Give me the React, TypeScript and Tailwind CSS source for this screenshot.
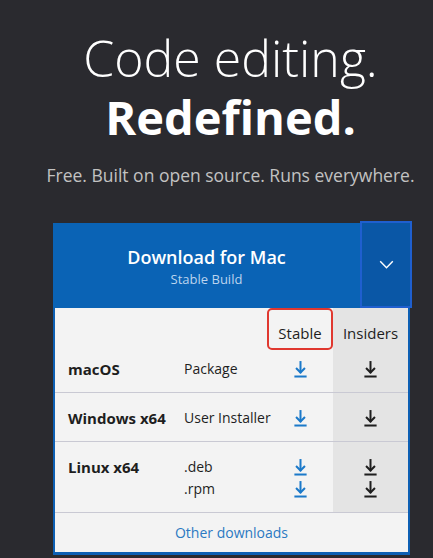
function DownArrow({ className }: { className?: string }) {
  return (
    <svg viewBox="0 0 12 16" className={className} fill="none" stroke="currentColor" strokeWidth="1.9" strokeLinecap="square">
      <path d="M6 1V10.5" />
      <path d="M1.8 6.6L6 10.8L10.2 6.6" strokeLinecap="butt" />
      <path d="M1.2 14.6H10.8" />
    </svg>
  );
}

const rows = [
  { os: "macOS", items: ["Package"] },
  { os: "Windows x64", items: ["User Installer"] },
  { os: "Linux x64", items: [".deb", ".rpm"] },
];

export default function App() {
  return (
    <div className="h-[558px] w-full overflow-hidden bg-[#2a2a2f] font-['Open_Sans',sans-serif]">
      <div className="flex flex-col items-center pl-[28px] pt-[29px] text-white">
        <h1 className="whitespace-nowrap text-center text-[50px] font-light leading-[59px]">Code editing.</h1>
        <h2 className="whitespace-nowrap text-center text-[47px] font-bold leading-[59px]">Redefined.</h2>
        <p className="mt-[16px] whitespace-nowrap text-center text-[17.5px] leading-6 text-[#c2c2c2]">
          Free. Built on open source. Runs everywhere.
        </p>
      </div>

      <div className="ml-[53px] mt-[36px] w-[357px]">
        <div className="flex h-[85px]">
          <div className="flex flex-1 flex-col items-center justify-center bg-[#0a63b5] pt-[2px]">
            <span className="text-[18px] font-semibold leading-6 text-white">Download for Mac</span>
            <span className="text-[13px] leading-5 text-[#bcd4ee]">Stable Build</span>
          </div>
          <button className="-mr-[2px] -mt-[2px] flex h-[87px] w-[52px] items-center justify-center border-2 border-[#1f5fcf] bg-[#0a57a6] text-white">
            <svg viewBox="0 0 16 10" className="h-[9px] w-[15px]" fill="none" stroke="currentColor" strokeWidth="1.6">
              <path d="M1 1.5L8 8.5L15 1.5" />
            </svg>
          </button>
        </div>

        <div className="border-x-2 border-b-[3px] border-[#0d5fb3] bg-[#f3f3f3]">
          <div className="grid grid-cols-[129px_83px_66px_75px] text-[#1e1e1e]">
            <div className="col-span-2 h-[36px]" />
            <div className="relative h-[36px] pt-[15px] text-center text-[15px] leading-5">
              Stable
              <div className="absolute inset-x-0 top-0 h-[42px] rounded-[5px] border-2 border-[#e0382f]" />
            </div>
            <div className="h-[36px] bg-[#e4e4e4] pt-[15px] text-center text-[15px] leading-5">Insiders</div>

            {rows.map((row) => (
              <div key={row.os} className="col-span-4 grid grid-cols-[129px_83px_66px_75px] border-b border-[#c9c9d3]">
                <div className="whitespace-nowrap pl-[13px] pt-[14px] text-[15px] font-bold leading-[22px]">{row.os}</div>
                <div className="pb-[12px] pt-[14px] text-[14px]">
                  {row.items.map((t) => (
                    <div key={t} className="h-[22px] whitespace-nowrap leading-[22px]">{t}</div>
                  ))}
                </div>
                <div className="flex flex-col items-center pt-[14px]">
                  {row.items.map((t) => (
                    <div key={t} className="flex h-[22px] items-center justify-center text-[#1b79c9]">
                      <DownArrow className="h-[17px] w-[13px]" />
                    </div>
                  ))}
                </div>
                <div className="flex flex-col items-center bg-[#e4e4e4] pt-[14px]">
                  {row.items.map((t) => (
                    <div key={t} className="flex h-[22px] items-center justify-center text-[#1e1e1e]">
                      <DownArrow className="h-[17px] w-[13px]" />
                    </div>
                  ))}
                </div>
              </div>
            ))}
          </div>
          <div className="flex h-[39px] items-center justify-center text-[14px] text-[#2b79c2]">Other downloads</div>
        </div>
      </div>
    </div>
  );
}
